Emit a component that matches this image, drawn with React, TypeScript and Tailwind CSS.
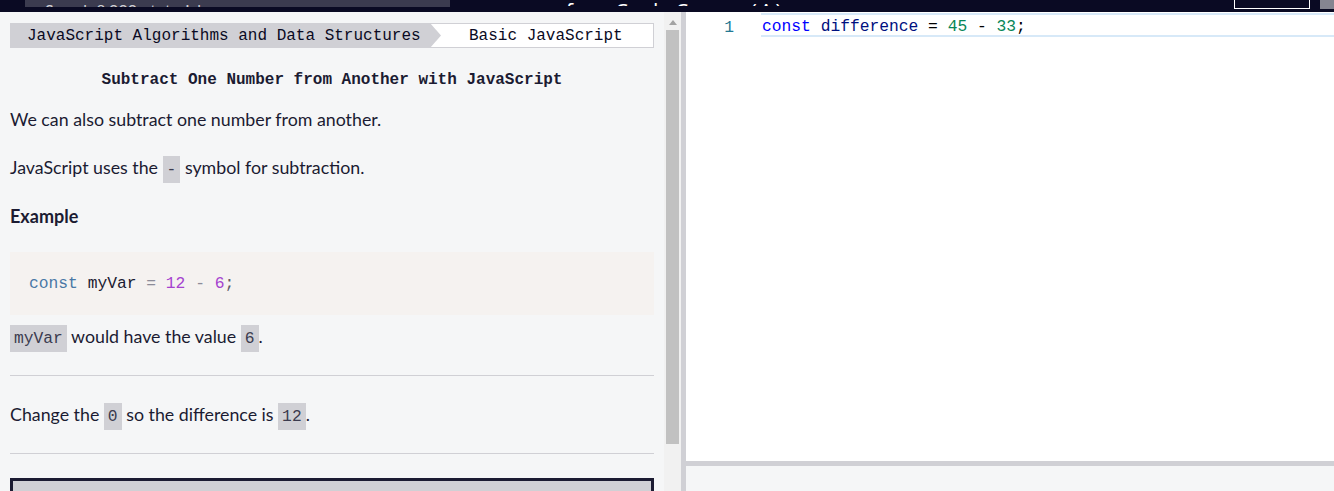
const mono = { fontFamily: '"Liberation Mono", "DejaVu Sans Mono", monospace' };
const lato = { fontFamily: 'Lato, "Noto Sans", sans-serif' };

function Code({ children }: { children: React.ReactNode }) {
    return (
        <code
            className="bg-[#d0d0d5] px-[4px] py-[4px] text-[16.3px] text-[#3b3b4f]"
            style={mono}
        >
            {children}
        </code>
    );
}

function TopBar() {
    return (
        <div className="flex h-[12px] items-start overflow-hidden bg-[#0a0a23]">
            <div className="ml-[25px] flex h-[7px] w-[425px] items-end overflow-hidden bg-[#3b3b4f] pl-[20px]">
                <span className="mb-[-11px] text-[16px] leading-[16px] text-[#d0d0d5]" style={lato}>
                    Search 8,000+ tutorials
                </span>
            </div>
            <div className="ml-[116px] flex h-[6px] items-end overflow-hidden">
                <span
                    className="mb-[-15px] text-[20px] leading-[20px] tracking-[3px] text-white"
                    style={{ fontFamily: '"Noto Sans", sans-serif' }}
                >
                    freeCodeCamp (A)
                </span>
            </div>
            <div className="ml-auto h-[9px] w-[76px] border border-t-0 border-white" />
            <div className="ml-[10px] h-[9px] w-[14px] bg-[#858591]" />
        </div>
    );
}

function Breadcrumb() {
    return (
        <div className="mt-[11px] flex h-[25px] text-[16px] text-[#0a0a23]" style={mono}>
            <div className="flex items-center bg-[#d0d0d5] pl-[17px] pr-[9px]">
                JavaScript Algorithms and Data Structures
            </div>
            <svg width="11" height="25" viewBox="0 0 11 25" className="relative z-10 shrink-0">
                <polygon points="0,0 11,12.5 0,25" fill="#d0d0d5" />
            </svg>
            <div className="-ml-[11px] flex flex-1 items-center justify-center border border-[#d0d0d5] bg-white pl-[8px]">
                Basic JavaScript
            </div>
        </div>
    );
}

function Instructions() {
    return (
        <div className="flex h-full w-[664px] flex-col overflow-hidden bg-[#f5f6f7] pl-[10px] pr-[10px] text-[#0a0a23]">
            <Breadcrumb />
            <h1
                className="mt-[20px] text-center text-[16px] leading-[24px] font-bold text-[#1b1b32]"
                style={mono}
            >
                Subtract One Number from Another with JavaScript
            </h1>
            <div className="text-[17.8px] leading-[27px] text-[#1b1b32]" style={lato}>
                <p className="mt-[14px]">We can also subtract one number from another.</p>
                <p className="mt-[21px]">
                    JavaScript uses the <Code>-</Code> symbol for subtraction.
                </p>
                <h2 className="mt-[20px] text-[18px] font-bold">Example</h2>
                <pre
                    className="mt-[22px] flex h-[63px] items-center bg-[#f5f2f0] pl-[19px] text-[16.3px]"
                    style={mono}
                >
                    <span className="text-[#4978a6]">const</span>
                    <span className="text-[#1b1b32]">&nbsp;myVar&nbsp;</span>
                    <span className="text-[#8c8c99]">=</span>
                    <span>&nbsp;</span>
                    <span className="text-[#a542cf]">12</span>
                    <span className="text-[#8c8c99]">&nbsp;-&nbsp;</span>
                    <span className="text-[#a542cf]">6</span>
                    <span className="text-[#5d5d6b]">;</span>
                </pre>
                <p className="mt-[8px]">
                    <Code>myVar</Code> would have the value <Code>6</Code>.
                </p>
                <hr className="mt-[23px] border-t border-[#d0d0d5]" />
                <p className="mt-[25px]">
                    Change the <Code>0</Code> so the difference is <Code>12</Code>.
                </p>
                <hr className="mt-[23px] border-t border-[#d0d0d5]" />
                <div className="mt-[24px] h-[40px] border-[3px] border-[#1b1b32] bg-[#d0d0d5]" />
            </div>
        </div>
    );
}

function Scrollbar() {
    return (
        <div className="flex w-[17px] flex-col items-center bg-[#f1f1f1]">
            <svg width="8" height="5" viewBox="0 0 8 5" className="mt-[8px]">
                <polygon points="4,0 8,5 0,5" fill="#a3a3a3" />
            </svg>
            <div className="mt-[5px] h-[414px] w-[13px] bg-[#c1c1c1]" />
        </div>
    );
}

function Editor() {
    return (
        <div className="flex flex-1 flex-col">
            <div className="flex h-[449px] bg-white text-[16.3px]" style={mono}>
                <div className="w-[75px] pt-[5px] pr-[27px] text-right leading-[22px] text-[#237893]">1</div>
                <div className="mt-[1px] h-[24px] flex-1 border-y-2 border-[#d7e9f8] pt-[2px] pl-[1px] leading-[20px]">
                    <span className="text-[#0000ff]">const</span>
                    <span className="text-[#001080]">&nbsp;difference&nbsp;</span>
                    <span className="text-[#000000]">=&nbsp;</span>
                    <span className="text-[#098658]">45</span>
                    <span className="text-[#000000]">&nbsp;-&nbsp;</span>
                    <span className="text-[#098658]">33</span>
                    <span className="text-[#000000]">;</span>
                </div>
            </div>
            <div className="h-[5px] bg-[#d0d0d5]" />
            <div className="flex-1 bg-[#f5f6f7]" />
        </div>
    );
}

export default function App() {
    return (
        <div className="flex h-[491px] w-[1334px] flex-col overflow-hidden bg-[#f5f6f7]">
            <TopBar />
            <div className="flex min-h-0 flex-1">
                <Instructions />
                <Scrollbar />
                <div className="w-[5px] bg-[#d0d0d5]" />
                <Editor />
            </div>
        </div>
    );
}
